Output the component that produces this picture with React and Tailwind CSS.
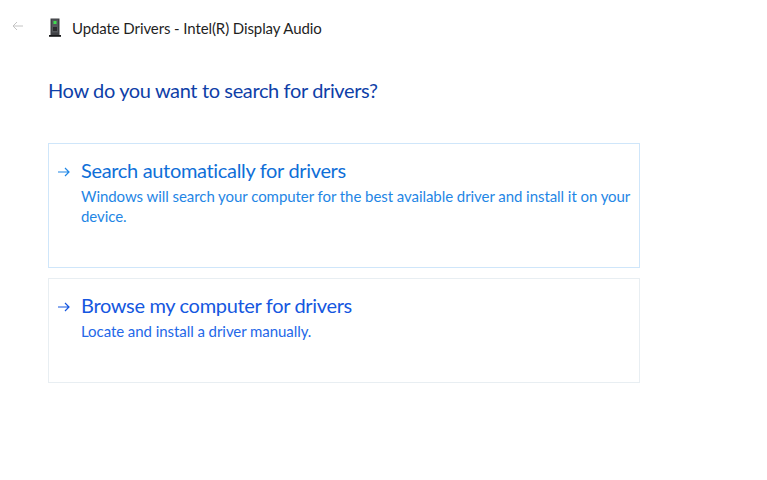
const font = "[font-family:Lato,sans-serif]";

function DeviceIcon() {
  return (
    <svg width="14" height="20" viewBox="0 0 14 20">
      <path d="M2.5 0.5h9v16.5h-9z" fill="#3f4144" />
      <path d="M1 17h12v1.8H1z" fill="#17181a" />
      <path d="M4 1.5h6v13H4z" fill="#55585c" />
      <rect x="5.5" y="3" width="3" height="3" fill="#3ee04e" />
      <rect x="5" y="9" width="4" height="4" fill="#2b2c2e" />
    </svg>
  );
}

function Arrow({ color }) {
  return (
    <svg width="14" height="12" viewBox="0 0 14 12" fill="none" stroke={color} strokeWidth="1.2">
      <path d="M1 6h11M8 2l4 4-4 4" />
    </svg>
  );
}

function Option({ title, text, height, border, titleColor, textColor, arrowColor }) {
  return (
    <div className={`flex w-[592px] border pl-[8px] pt-[12px] ${height} ${border}`}>
      <div className="w-[24px] pt-[10px] shrink-0">
        <Arrow color={arrowColor} />
      </div>
      <div>
        <div className={`text-[20px] tracking-[-0.33px] leading-[28px] ${titleColor}`}>{title}</div>
        <div className={`text-[15px] tracking-[-0.06px] leading-[20px] mt-[2px] ${textColor}`}>{text}</div>
      </div>
    </div>
  );
}

export default function App() {
  return (
    <div className={`w-[767px] h-[480px] bg-white overflow-hidden ${font}`}>
      <div className="flex items-center h-[20px] mt-[18px]">
        <svg className="ml-[12px] mr-[25px] mb-[4px]" width="11" height="10" viewBox="0 0 11 10" fill="none" stroke="#c4c4c4" strokeWidth="1">
          <path d="M11 5H1M5 1L1 5l4 4" />
        </svg>
        <DeviceIcon />
        <span className="ml-[10px] text-[15px] tracking-[-0.1px] text-[#1f1f1f]">Update Drivers - Intel(R) Display Audio</span>
      </div>
      <div className="pl-[48px]">
        <h1 className="mt-[37px] text-[20px] tracking-[-0.37px] leading-[30px] text-[#0f3fa8]">How do you want to search for drivers?</h1>
        <div className="mt-[38px] flex flex-col gap-[10px]">
          <Option
            title="Search automatically for drivers"
            text="Windows will search your computer for the best available driver and install it on your device."
            height="h-[125px]"
            border="border-[#cfe6fa]"
            titleColor="text-[#0f6fd8]"
            textColor="text-[#1f86e5]"
            arrowColor="#1f86e5"
          />
          <Option
            title="Browse my computer for drivers"
            text="Locate and install a driver manually."
            height="h-[105px]"
            border="border-[#e8eef2]"
            titleColor="text-[#1557e0]"
            textColor="text-[#2468e8]"
            arrowColor="#1557e0"
          />
        </div>
      </div>
    </div>
  );
}
